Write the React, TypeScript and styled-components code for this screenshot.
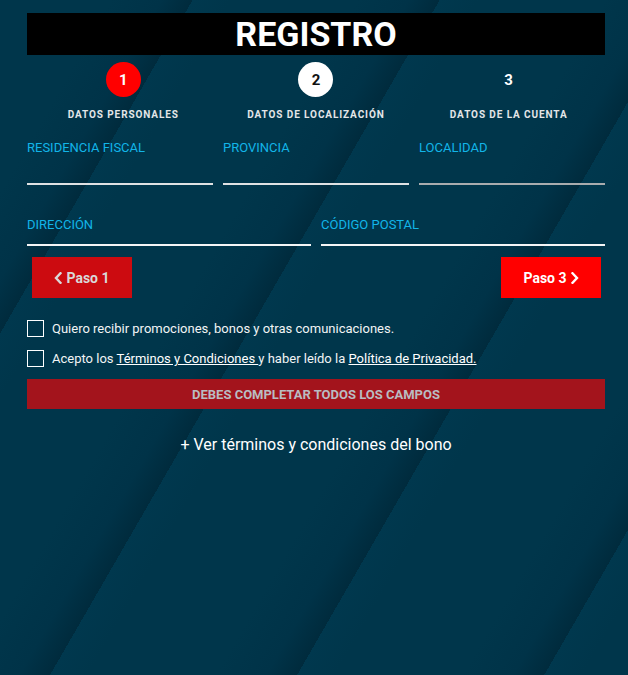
import React from "react";
import styled, { createGlobalStyle } from "styled-components";

const Global = createGlobalStyle`
  html, body { margin: 0; padding: 0; }
  body { font-family: Roboto, "Liberation Sans", Arial, sans-serif; background: #00364b; }
  * { box-sizing: border-box; }
`;

const Page = styled.div`
  min-height: 100vh;
  width: 100%;
  background-color: #00364b;
  background-image: repeating-linear-gradient(
    120deg,
    #00364b 0px,
    #00364b 96px,
    #003348 140px,
    #002b3d 166.8px,
    #00384e 166.8px,
    #00364b 200px,
    #00364b 214px
  );
  padding: 13px 23px 0 27px;
`;

const Title = styled.h1`
  margin: 0;
  height: 42px;
  background: #000;
  color: #fff;
  font-size: 34px;
  font-weight: 700;
  line-height: 42px;
  text-align: center;
`;

const Steps = styled.div`
  display: grid;
  grid-template-columns: repeat(3, 1fr);
  margin-top: 7px;
`;

const Step = styled.div`
  display: flex;
  flex-direction: column;
  align-items: center;
`;

const Circle = styled.div<{ $variant: "active" | "done" | "none" }>`
  width: 35px;
  height: 35px;
  border-radius: 50%;
  display: flex;
  align-items: center;
  justify-content: center;
  font-size: 15px;
  font-weight: 700;
  background: ${(p) => (p.$variant === "active" ? "#ff0000" : p.$variant === "done" ? "#ffffff" : "transparent")};
  color: ${(p) => (p.$variant === "done" ? "#111" : "#fff")};
`;

const StepLabel = styled.div`
  margin-top: 12px;
  font-size: 10px;
  line-height: 12px;
  font-weight: 700;
  letter-spacing: 0.9px;
  color: #e4e6e8;
  white-space: nowrap;
`;

const FieldRow = styled.div<{ $cols: number; $mt: number }>`
  display: grid;
  grid-template-columns: repeat(${(p) => p.$cols}, 1fr);
  column-gap: 10px;
  margin-top: ${(p) => p.$mt}px;
`;

const Field = styled.div`
  display: flex;
  flex-direction: column;
`;

const FieldLabel = styled.label`
  font-size: 13px;
  line-height: 15px;
  color: #12b5e8;
  white-space: nowrap;
`;

const FieldInput = styled.div<{ $h: number; $line: string }>`
  height: ${(p) => p.$h}px;
  border-bottom: 2px solid ${(p) => p.$line};
`;

const Nav = styled.div`
  display: flex;
  justify-content: space-between;
  margin-top: 11px;
  padding: 0 4px 0 5px;
`;

const NavButton = styled.button<{ $primary?: boolean }>`
  width: 100px;
  height: 41px;
  border: 0;
  padding: 0;
  display: flex;
  align-items: center;
  justify-content: center;
  gap: 4px;
  font-family: Roboto, "Liberation Sans", Arial, sans-serif;
  font-size: 14px;
  font-weight: 700;
  background: ${(p) => (p.$primary ? "#ff0000" : "#cc0b10")};
  color: ${(p) => (p.$primary ? "#ffffff" : "#d9d9d9")};
  cursor: pointer;
`;

const CheckRow = styled.div<{ $mt: number }>`
  display: flex;
  align-items: center;
  gap: 8px;
  margin-top: ${(p) => p.$mt}px;
  height: 17px;
  font-size: 13px;
  color: #f2f4f5;
`;

const Box = styled.span`
  width: 17px;
  height: 17px;
  border: 1px solid #ffffff;
  flex: none;
`;

const Link = styled.a`
  color: #ffffff;
  text-decoration: underline;
`;

const ErrorBar = styled.div`
  margin-top: 12px;
  height: 30px;
  background: #a3141c;
  display: flex;
  align-items: center;
  justify-content: center;
  font-size: 13px;
  font-weight: 700;
  color: #b9bcc2;
`;

const BonusLink = styled.div`
  margin-top: 26px;
  font-size: 16px;
  line-height: 19px;
  text-align: center;
  color: #ffffff;
`;

const Chevron = ({ dir }: { dir: "left" | "right" }) => (
  <svg width="8" height="12" viewBox="0 0 8 12" fill="none">
    <path
      d={dir === "left" ? "M6.5 1.2 L2 6 L6.5 10.8" : "M1.5 1.2 L6 6 L1.5 10.8"}
      stroke="currentColor"
      strokeWidth="2.4"
      strokeLinecap="square"
      strokeLinejoin="miter"
    />
  </svg>
);

export default function App() {
  return (
    <>
      <Global />
      <Page>
        <Title>REGISTRO</Title>
        <Steps>
          <Step>
            <Circle $variant="active">1</Circle>
            <StepLabel>DATOS PERSONALES</StepLabel>
          </Step>
          <Step>
            <Circle $variant="done">2</Circle>
            <StepLabel>DATOS DE LOCALIZACIÓN</StepLabel>
          </Step>
          <Step>
            <Circle $variant="none">3</Circle>
            <StepLabel>DATOS DE LA CUENTA</StepLabel>
          </Step>
        </Steps>

        <FieldRow $cols={3} $mt={19}>
          <Field>
            <FieldLabel>RESIDENCIA FISCAL</FieldLabel>
            <FieldInput $h={30} $line="#dfe1e3" />
          </Field>
          <Field>
            <FieldLabel>PROVINCIA</FieldLabel>
            <FieldInput $h={30} $line="#dfe1e3" />
          </Field>
          <Field>
            <FieldLabel>LOCALIDAD</FieldLabel>
            <FieldInput $h={30} $line="#a9acae" />
          </Field>
        </FieldRow>

        <FieldRow $cols={2} $mt={32}>
          <Field>
            <FieldLabel>DIRECCIÓN</FieldLabel>
            <FieldInput $h={14} $line="#f4f5f6" />
          </Field>
          <Field>
            <FieldLabel>CÓDIGO POSTAL</FieldLabel>
            <FieldInput $h={14} $line="#f4f5f6" />
          </Field>
        </FieldRow>

        <Nav>
          <NavButton>
            <Chevron dir="left" />
            Paso 1
          </NavButton>
          <NavButton $primary>
            Paso 3
            <Chevron dir="right" />
          </NavButton>
        </Nav>

        <CheckRow $mt={22}>
          <Box />
          <span>Quiero recibir promociones, bonos y otras comunicaciones.</span>
        </CheckRow>
        <CheckRow $mt={13}>
          <Box />
          <span>
            Acepto los <Link>Términos y Condiciones </Link>y haber leído la{" "}
            <Link>Política de Privacidad.</Link>
          </span>
        </CheckRow>

        <ErrorBar>DEBES COMPLETAR TODOS LOS CAMPOS</ErrorBar>

        <BonusLink>+ Ver términos y condiciones del bono</BonusLink>
      </Page>
    </>
  );
}
